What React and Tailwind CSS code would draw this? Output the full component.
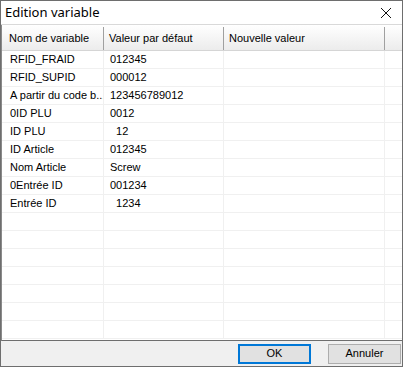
import React from "react";

const rows = [
  ["RFID_FRAID", "012345"],
  ["RFID_SUPID", "000012"],
  ["A partir du code b...", "123456789012"],
  ["0ID PLU", "0012"],
  ["ID PLU", "  12"],
  ["ID Article", "012345"],
  ["Nom Article", "Screw"],
  ["0Entrée ID", "001234"],
  ["Entrée ID", "  1234"],
];

export default function App() {
  const all = [...rows];
  while (all.length < 16) all.push(["", ""]);
  return (
    <div
      className="w-[403px] h-[367px] bg-white border border-[#6e6e6e] flex flex-col overflow-hidden text-black"
      style={{ fontFamily: '"Liberation Sans", Arial, sans-serif' }}
    >
      <div className="h-[24px] shrink-0 flex items-center justify-between pl-[4px] pr-[8px] border-b border-[#d9d9d9]">
        <span className="text-[13px]" style={{ fontFamily: '"Noto Sans", sans-serif' }}>Edition variable</span>
        <svg width="12" height="12" viewBox="0 0 12 12" className="mr-[2px]">
          <path d="M1 1 L11 11 M11 1 L1 11" stroke="#111" strokeWidth="1" />
        </svg>
      </div>
      <div className="flex-1 min-h-0 overflow-hidden border-l border-[#8a8a8a] border-b border-b-[#6e6e6e] text-[11px]">
        <div className="h-[26px] flex border-b border-[#d5d5d5] bg-gradient-to-b from-[#ffffff] to-[#ececec] pt-[2px]">
          <div className="w-[102px] border-r border-[#a0a0a0] pl-[7px] flex items-center">Nom de variable</div>
          <div className="w-[120px] border-r border-[#a0a0a0] pl-[5px] flex items-center">Valeur par défaut</div>
          <div className="w-[161px] border-r border-[#a0a0a0] pl-[5px] flex items-center">Nouvelle valeur</div>
          <div className="flex-1"></div>
        </div>
        {all.map((r, i) => (
          <div key={i} className="h-[18px] flex border-b border-[#f0f0f0]">
            <div className="w-[102px] border-r border-[#f0f0f0] pl-[8px] flex items-center whitespace-pre overflow-hidden">{r[0]}</div>
            <div className="w-[120px] border-r border-[#f0f0f0] pl-[6px] flex items-center whitespace-pre">{r[1]}</div>
            <div className="w-[161px] border-r border-[#f0f0f0]"></div>
            <div className="flex-1"></div>
          </div>
        ))}
      </div>
      <div className="h-[25px] shrink-0 bg-[#f0f0f0] flex items-center justify-end gap-[17px] pr-[1px] text-[11px]">
        <button className="w-[73px] h-[20px] bg-[#e1e1e1] border-2 border-[#0078d7] flex items-center justify-center">OK</button>
        <button className="w-[73px] h-[20px] bg-[#e1e1e1] border border-[#adadad] flex items-center justify-center">Annuler</button>
      </div>
    </div>
  );
}
